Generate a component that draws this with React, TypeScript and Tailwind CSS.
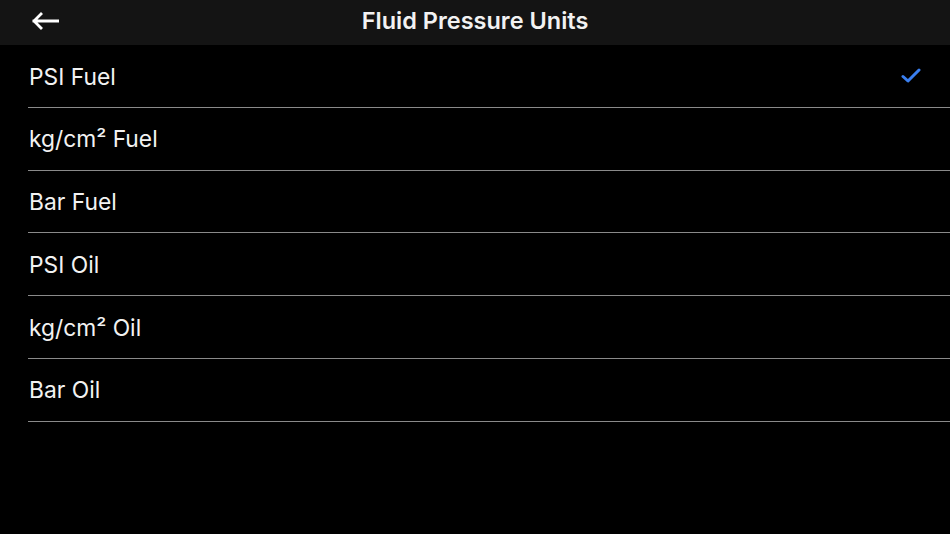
import React from "react";

const items = [
  "PSI Fuel",
  "kg/cm² Fuel",
  "Bar Fuel",
  "PSI Oil",
  "kg/cm² Oil",
  "Bar Oil",
];

export default function App() {
  return (
    <div
      className="w-[950px] h-[534px] bg-black text-[#f2f2f2] overflow-hidden"
      style={{ fontFamily: "Inter, 'Noto Sans', sans-serif" }}
    >
      <div className="relative h-[45px] bg-[#141414] flex items-center justify-center">
        <button className="absolute left-[30px] top-[12px] w-[30px] h-[18px] flex items-center justify-center">
          <svg width="28" height="18" viewBox="0 0 28 18" fill="none">
            <path
              d="M27 9H3M10 2L3 9L10 16"
              stroke="#ffffff"
              strokeWidth="2.8"
              strokeLinecap="square"
              strokeLinejoin="miter"
            />
          </svg>
        </button>
        <div className="text-[23.5px] font-semibold leading-none -mt-[3px]">
          Fluid Pressure Units
        </div>
      </div>
      <div className="pl-[28px]">
        {items.map((label, i) => (
          <div
            key={label}
            className="h-[62.8px] box-border border-b border-[#8a8a8a] flex items-center justify-between pr-[29px]"
          >
            <span className="pl-[1px] pt-[2px] text-[22.8px] leading-none">{label}</span>
            {i === 0 && (
              <svg width="20" height="16" viewBox="0 0 20 16" fill="none">
                <path
                  d="M2 8.5L7 13L18 2"
                  stroke="#3a7ff0"
                  strokeWidth="3"
                  strokeLinecap="round"
                  strokeLinejoin="round"
                />
              </svg>
            )}
          </div>
        ))}
      </div>
    </div>
  );
}
